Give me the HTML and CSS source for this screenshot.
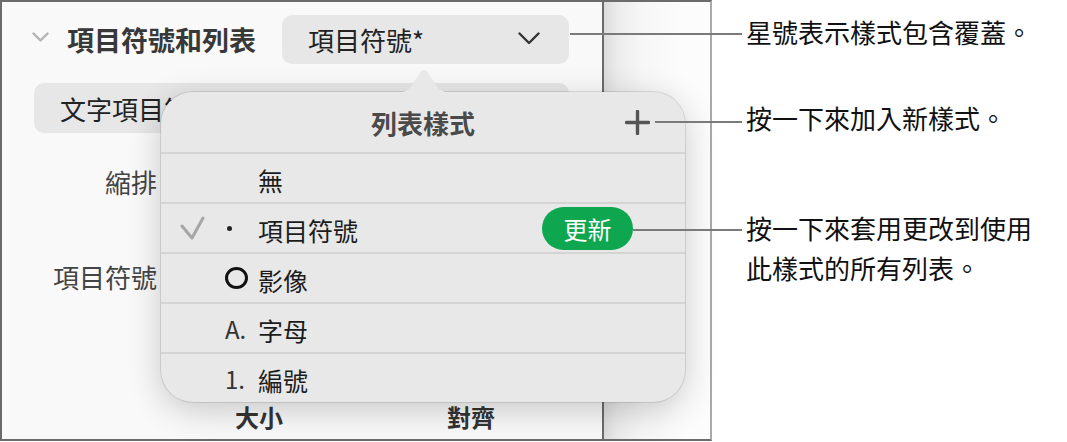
FILE: index.html
```html
<!DOCTYPE html>
<html lang="zh-Hant">
<head>
    <meta charset="UTF-8">
    <title>列表樣式</title>
    <link rel="stylesheet" href="styles.css">
</head>
<body>
<div class="figure">
    <div class="shot">
        <div class="inspector">
            <div class="section-head">
                <svg class="disclosure" width="17" height="10" viewBox="0 0 17 10">
                    <path d="M1.5 1.5 L8.5 8.5 L15.5 1.5" fill="none" stroke="#b3b3b3" stroke-width="2.4" stroke-linecap="round" stroke-linejoin="round"/>
                </svg>
                <h2 class="section-title">項目符號和列表</h2>
                <div class="select">
                    <span>項目符號*</span>
                    <svg class="select-chevron" width="22" height="13" viewBox="0 0 22 13">
                        <path d="M1.5 1.5 L11 11 L20.5 1.5" fill="none" stroke="#333" stroke-width="2.4" stroke-linecap="round" stroke-linejoin="round"/>
                    </svg>
                </div>
            </div>

            <div class="select select-wide">文字項目符號</div>

            <div class="field-row field-indent"><span class="field-label">縮排</span></div>
            <div class="field-row field-bullet"><span class="field-label">項目符號</span></div>

            <div class="sub-labels">
                <span>大小</span>
                <span>對齊</span>
            </div>
        </div>
        <div class="canvas"></div>

        <!-- 列表樣式選單 -->
        <div class="popover">
            <svg class="popover-arrow" width="58" height="26" viewBox="0 0 58 26">
                <path d="M0 26 C9 26 14 23 18 17 L25 6 Q29 0 33 6 L40 17 C44 23 49 26 58 26 Z" fill="#e8e8e8"/>
            </svg>
            <div class="popover-head">
                <span></span>
                <span class="popover-title">列表樣式</span>
                <svg class="add-btn" width="25" height="25" viewBox="0 0 25 25">
                    <path d="M12.5 1.5 V23.5 M1.5 12.5 H23.5" stroke="#555" stroke-width="3.4" stroke-linecap="round"/>
                </svg>
            </div>
            <div class="style-row">
                <span class="check"></span>
                <span class="marker"></span>
                <span class="style-name">無</span>
            </div>
            <div class="style-row">
                <span class="check">
                    <svg width="26" height="26" viewBox="0 0 26 26">
                        <path d="M3 11 L13 23 L24 3" fill="none" stroke="#a6a6a6" stroke-width="3" stroke-linecap="round" stroke-linejoin="round"/>
                    </svg>
                </span>
                <span class="marker"><i class="dot"></i></span>
                <span class="style-name">項目符號</span>
                <button class="update-btn">更新</button>
            </div>
            <div class="style-row">
                <span class="check"></span>
                <span class="marker"><i class="ring"></i></span>
                <span class="style-name">影像</span>
            </div>
            <div class="style-row">
                <span class="check"></span>
                <span class="marker">A.</span>
                <span class="style-name">字母</span>
            </div>
            <div class="style-row">
                <span class="check"></span>
                <span class="marker">1.</span>
                <span class="style-name">編號</span>
            </div>
        </div>
    </div>

    <div class="notes">
        <p class="note note-star">星號表示樣式包含覆蓋。</p>
        <p class="note note-add">按一下來加入新樣式。</p>
        <p class="note note-update">按一下來套用更改到使用<br>此樣式的所有列表。</p>
    </div>

    <!-- 指示線 -->
    <div class="leader leader-star"></div>
    <div class="leader leader-add"></div>
    <div class="leader leader-update"></div>
</div>
</body>
</html>
```

FILE: styles.css
```css
body {
    margin: 0;
    background-color: #ffffff;
    font-family: "Noto Sans CJK TC", "Noto Sans", sans-serif;
    color: #111;
}

.figure {
    position: relative;
    display: flex;
    width: 1067px;
    height: 442px;
}

/* 左邊的截圖框 */
.shot {
    position: relative;
    display: flex;
    box-sizing: border-box;
    width: 712px;
    height: 441px;
    border-top: 2px solid #6b6b6b;
    border-left: 2px solid #6b6b6b;
    border-bottom: 2px solid #6b6b6b;
    border-right: 2px solid #a9a9a9;
}

.inspector {
    box-sizing: border-box;
    width: 602px;
    padding-top: 13px;
    background-color: #f9f9f9;
    border-right: 2px solid #6b6b6b;
}

.canvas {
    flex: 1;
    background: linear-gradient(to right, #dcdcdc 0, #ececec 14px, #f7f7f7 40px, #fcfcfc 80px);
}

.section-head {
    display: flex;
    align-items: center;
    height: 49px;
}

.disclosure {
    margin-left: 30px;
    margin-top: -6px;
}

.section-title {
    margin: 0 0 0 18px;
    font-size: 27px;
    font-weight: 700;
    color: #383838;
    line-height: 49px;
}

.select {
    display: flex;
    align-items: center;
    justify-content: space-between;
    box-sizing: border-box;
    height: 49px;
    padding: 0 29px 0 26px;
    border-radius: 10px;
    background-color: #e7e7e7;
    font-size: 26px;
    color: #222;
}

.section-head .select {
    width: 287px;
    margin-left: 26px;
}

.select-chevron {
    margin-top: -2px;
}

.select-wide {
    width: 535px;
    height: 50px;
    margin: 19px 0 0 32px;
}

.field-row {
    display: flex;
    height: 50px;
    align-items: center;
}

.field-label {
    width: 155px;
    text-align: right;
    font-size: 26px;
    color: #444;
}

.field-indent {
    margin-top: 23px;
}

.field-bullet {
    margin-top: 45px;
}

.sub-labels {
    display: flex;
    gap: 164px;
    height: 36px;
    align-items: center;
    margin-top: 97px;
    padding-left: 233px;
    font-size: 24px;
    font-weight: 700;
    color: #333;
}

/* 彈出選單 */
.popover {
    position: absolute;
    left: 159px;
    top: 90px;
    box-sizing: border-box;
    width: 524px;
    height: 310px;
    border-radius: 32px;
    background-color: #e8e8e8;
    box-shadow: 0 0 0 1px rgba(0, 0, 0, 0.1), 0 8px 34px rgba(0, 0, 0, 0.2);
}

.popover-arrow {
    position: absolute;
    left: 234px;
    top: -25px;
}

.popover-head {
    display: grid;
    grid-template-columns: 1fr auto 1fr;
    align-items: center;
    height: 60px;
}

.popover-title {
    font-size: 26px;
    font-weight: 700;
    color: #4a4a4a;
}

.add-btn {
    justify-self: end;
    margin-right: 35px;
}

.style-row {
    display: flex;
    align-items: center;
    box-sizing: border-box;
    height: 50px;
    padding-left: 18px;
    border-top: 2px solid #d4d4d4;
    font-size: 25px;
    color: #1c1c1c;
}

.check {
    display: flex;
    width: 40px;
    height: 26px;
}

.marker {
    display: flex;
    align-items: center;
    width: 39px;
    padding-left: 6px;
    box-sizing: border-box;
    font-size: 24px;
    color: #333;
}

.dot {
    display: block;
    width: 5px;
    height: 5px;
    margin-left: 2px;
    border-radius: 50%;
    background-color: #222;
}

.ring {
    display: block;
    box-sizing: border-box;
    width: 23px;
    height: 22px;
    border: 3.6px solid #111;
    border-radius: 50%;
}

.style-name {
    margin-top: 3px;
}

.update-btn {
    margin-left: auto;
    margin-right: 52px;
    width: 91px;
    height: 43px;
    border: none;
    border-radius: 22px;
    background-color: #0ea64f;
    color: #ffffff;
    font-family: inherit;
    font-size: 24px;
    padding: 0;
}

/* 右邊的說明文字 */
.notes {
    margin-left: 34px;
}

.note {
    margin: 0;
    font-size: 26px;
    line-height: 40px;
    color: #111;
}

.note-star {
    margin-top: 12px;
}

.note-add {
    margin-top: 46px;
}

.note-update {
    margin-top: 70px;
}

.leader {
    position: absolute;
    height: 2px;
    background-color: #7a7a7a;
}

.leader-star {
    left: 570px;
    top: 33px;
    width: 172px;
}

.leader-add {
    left: 655px;
    top: 121px;
    width: 87px;
}

.leader-update {
    left: 633px;
    top: 229px;
    width: 109px;
}
```
